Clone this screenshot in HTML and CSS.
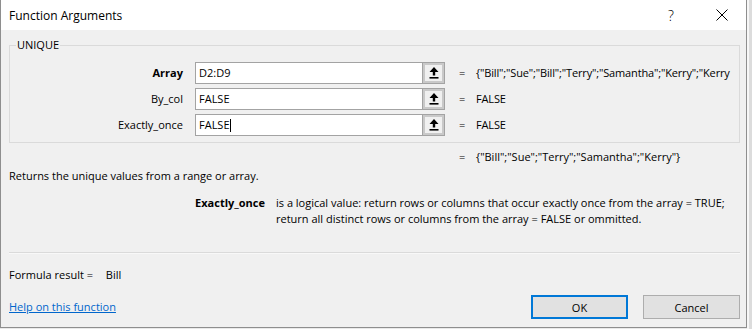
FILE: index.html
```html
<!DOCTYPE html>
<html lang="en">
<head>
    <meta charset="UTF-8">
    <meta name="viewport" content="width=device-width, initial-scale=1.0">
    <title>Function Arguments</title>
    <link rel="stylesheet" href="styles.css">
</head>
<body>
    <div class="screen">
        <div class="dialog">
            <!-- title bar -->
            <div class="titlebar">
                <span class="title">Function Arguments</span>
                <span class="help">?</span>
                <span class="close">
                    <svg width="12" height="12" viewBox="0 0 12 12"><path d="M0.5 0.5 L11.5 11.5 M11.5 0.5 L0.5 11.5" stroke="#000" stroke-width="1" fill="none"/></svg>
                </span>
            </div>

            <div class="content">
                <fieldset class="group">
                    <legend>UNIQUE</legend>

                    <div class="arg">
                        <span class="arg-name strong">Array</span>
                        <div class="field">
                            <span class="field-text">D2:D9</span>
                            <span class="ref-btn"><svg width="12" height="13" viewBox="0 0 12 13"><path d="M6 1 L10.5 6 L7.2 6 L7.2 9.5 L4.8 9.5 L4.8 6 L1.5 6 Z" fill="#000"/><rect x="1.5" y="11" width="9" height="1.6" fill="#000"/></svg></span>
                        </div>
                        <span class="eq">=</span>
                        <span class="arg-value">{"Bill";"Sue";"Bill";"Terry";"Samantha";"Kerry";"Kerry</span>
                    </div>

                    <div class="arg">
                        <span class="arg-name">By_col</span>
                        <div class="field">
                            <span class="field-text">FALSE</span>
                            <span class="ref-btn"><svg width="12" height="13" viewBox="0 0 12 13"><path d="M6 1 L10.5 6 L7.2 6 L7.2 9.5 L4.8 9.5 L4.8 6 L1.5 6 Z" fill="#000"/><rect x="1.5" y="11" width="9" height="1.6" fill="#000"/></svg></span>
                        </div>
                        <span class="eq">=</span>
                        <span class="arg-value">FALSE</span>
                    </div>

                    <div class="arg">
                        <span class="arg-name">Exactly_once</span>
                        <div class="field">
                            <span class="field-text">FALSE<span class="caret"></span></span>
                            <span class="ref-btn"><svg width="12" height="13" viewBox="0 0 12 13"><path d="M6 1 L10.5 6 L7.2 6 L7.2 9.5 L4.8 9.5 L4.8 6 L1.5 6 Z" fill="#000"/><rect x="1.5" y="11" width="9" height="1.6" fill="#000"/></svg></span>
                        </div>
                        <span class="eq">=</span>
                        <span class="arg-value">FALSE</span>
                    </div>
                </fieldset>

                <div class="result-line">
                    <span class="eq">=</span>
                    <span>{"Bill";"Sue";"Terry";"Samantha";"Kerry"}</span>
                </div>

                <p class="summary">Returns the unique values from a range or array.</p>

                <div class="arg-help">
                    <span class="arg-help-name">Exactly_once</span>
                    <span class="arg-help-text">is a logical value: return rows or columns that occur exactly once from the array = TRUE;<br>return all distinct rows or columns from the array = FALSE or ommitted.</span>
                </div>

                <div class="divider"></div>

                <div class="formula-result">
                    <span class="formula-label">Formula result =</span>
                    <span>Bill</span>
                </div>

                <div class="footer">
                    <a class="help-link" href="#">Help on this function</a>
                    <button class="btn btn-primary">OK</button>
                    <button class="btn">Cancel</button>
                </div>
            </div>
        </div>
        <div class="sheet-edge"></div>
    </div>
</body>
</html>
```

FILE: styles.css
```css
body, html {
    margin: 0;
    padding: 0;
    font-family: "Open Sans", "Noto Sans", sans-serif;
    font-size: 11px;
    color: #000;
    background-color: #e9e9e9;
}
.screen {
    display: flex;
    width: 752px;
    height: 329px;
    overflow: hidden;
}
.dialog {
    width: 745px;
    height: 327px;
    border-left: 1px solid #8e8e8e;
    border-right: 1px solid #8e8e8e;
    border-bottom: 1px solid #8e8e8e;
    background-color: #f0f0f0;
    display: flex;
    flex-direction: column;
}
.sheet-edge {
    flex: 1;
    border-left: 2px solid #f7f7f7;
    background-color: #dcdcdc;
}

/* title bar */
.titlebar {
    height: 30px;
    background-color: #fff;
    display: flex;
    align-items: center;
    padding-left: 8px;
}
.title {
    font-size: 12px;
    flex: 1;
}
.help {
    font-size: 14px;
    font-weight: 300;
    width: 14px;
    margin-right: 34px;
}
.close {
    display: flex;
    width: 12px;
    margin-right: 18px;
}

.content {
    padding: 0 6px 0 8px;
    line-height: 16px;
}

/* argument group */
.group {
    margin: 7px 0 0 0;
    padding: 9px 0 6px 0;
    border: 1px solid #dadada;
    min-width: 0;
}
.group legend {
    margin-left: 6px;
    padding: 0 1px;
    line-height: 16px;
}
.arg {
    display: flex;
    align-items: center;
    height: 22px;
    margin-bottom: 4px;
}
.arg:last-child {
    margin-bottom: 0;
}
.arg-name {
    width: 173px;
    text-align: right;
    margin-right: 12px;
}
.strong {
    font-weight: 700;
}
.field {
    width: 250px;
    height: 22px;
    box-sizing: border-box;
    border: 1px solid #a3a3a3;
    background-color: #fff;
    display: flex;
}
.field-text {
    flex: 1;
    padding-left: 3px;
    line-height: 20px;
    display: flex;
    align-items: center;
}
.caret {
    display: inline-block;
    width: 1px;
    height: 13px;
    background-color: #000;
}
.ref-btn {
    width: 22px;
    height: 20px;
    box-sizing: border-box;
    border-left: 1px solid #a3a3a3;
    background-color: #f0f0f0;
    box-shadow: inset 0 0 0 2px #c9c9c9;
    display: flex;
    align-items: center;
    justify-content: center;
    padding-bottom: 2px;
}
.eq {
    width: 17px;
    margin-left: 14px;
}
.arg-value {
    flex: 1;
    white-space: nowrap;
    letter-spacing: -0.15px;
}

.result-line {
    display: flex;
    margin-top: 6px;
    padding-left: 450px;
}
.result-line .eq {
    margin-left: 0;
}
.summary {
    margin: 3px 0 0 0;
}
.arg-help {
    display: flex;
    margin-top: 11px;
}
.arg-help-name {
    width: 256px;
    text-align: right;
    font-weight: 700;
    margin-right: 11px;
}
.arg-help-text {
    white-space: nowrap;
}
.divider {
    margin-top: 25px;
    height: 1px;
    background-color: #dadada;
    border-bottom: 1px solid #f8f8f8;
}
.formula-result {
    margin-top: 13px;
}
.formula-label {
    display: inline-block;
    width: 94px;
}

/* footer */
.footer {
    display: flex;
    align-items: center;
    margin-top: 12px;
}
.help-link {
    flex: 1;
    color: #0066cc;
    text-decoration: underline;
}
.btn {
    width: 97px;
    height: 24px;
    margin-left: 15px;
    font-family: inherit;
    font-size: 11px;
    background-color: #e1e1e1;
    border: 1px solid #adadad;
    padding: 0;
}
.btn-primary {
    border: 2px solid #0078d7;
}
```
